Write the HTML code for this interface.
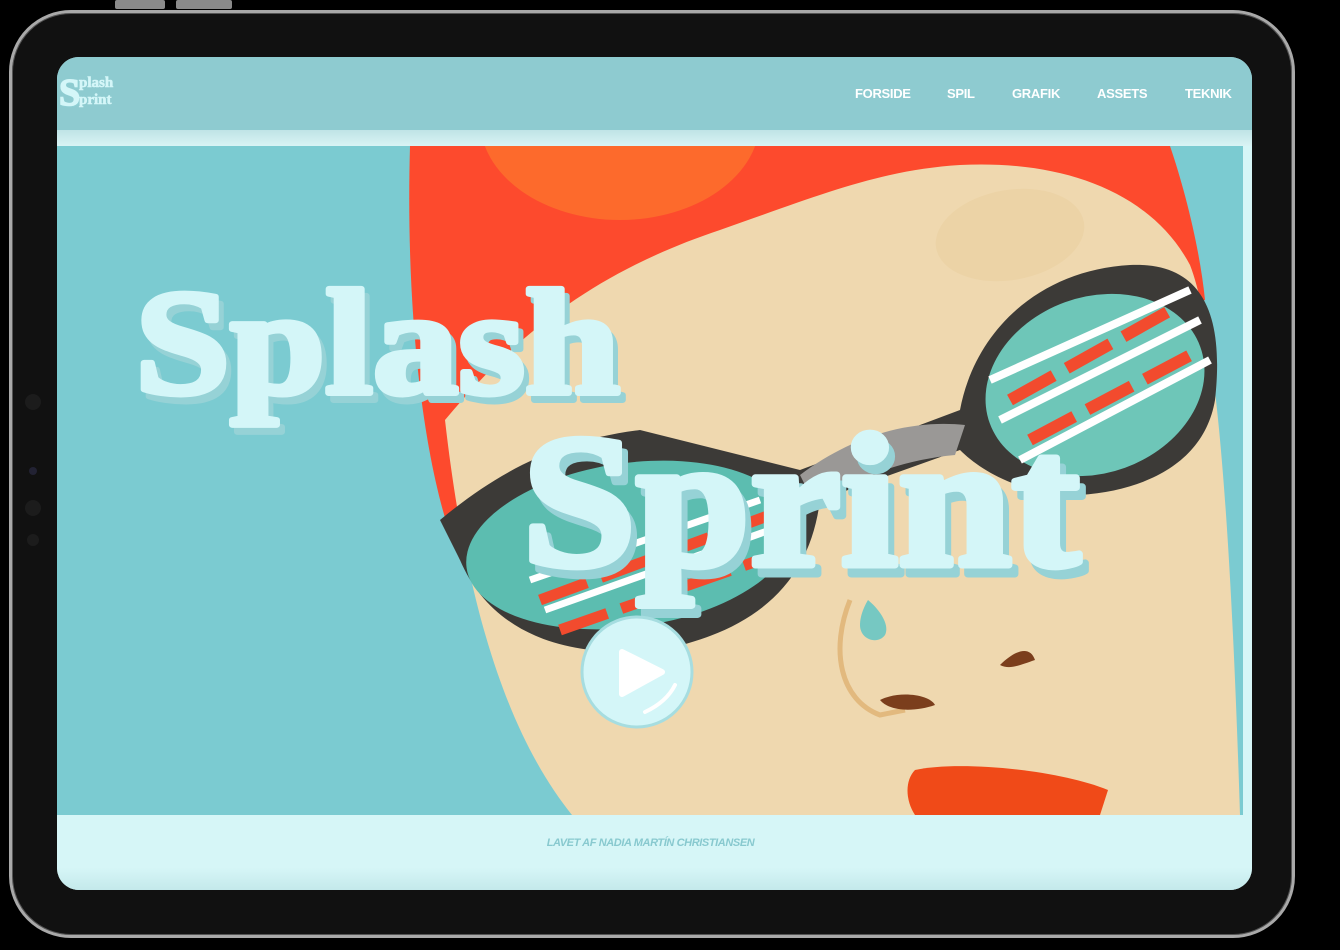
<!DOCTYPE html>
<html><head><meta charset="utf-8"><style>
html,body{margin:0;padding:0;background:#000;width:1340px;height:950px;overflow:hidden;font-family:"Liberation Sans",Arial,sans-serif}
.frame{position:absolute;left:9px;top:10px;width:1286px;height:928px;border-radius:62px;background:#111;border:3px solid #a9a9a9;box-sizing:border-box;box-shadow:inset 0 0 0 1px #555}
.btn{position:absolute;top:0;height:9px;background:#8a8a8a;border-radius:2px}
.screen{position:absolute;left:57px;top:57px;width:1195px;height:833px;border-radius:22px;overflow:hidden;background:#d6f6f7}
.hdr{position:absolute;left:0;top:0;width:100%;height:73px;background:#8ecbd0}
.strip{position:absolute;left:0;top:73px;width:100%;height:16px;background:linear-gradient(#bfe3e6,#d9f3f4)}
.nav{position:absolute;top:29px;color:#fff;font-weight:bold;font-size:13px;letter-spacing:-0.3px}
.foot{position:absolute;left:0;top:758px;width:100%;height:75px;background:linear-gradient(#d6f6f7 70%,#c4e9eb)}
.ft{position:absolute;top:22px;left:-4px;width:100%;text-align:center;font-size:11px;font-weight:bold;font-style:italic;color:#88c9cf;letter-spacing:-0.4px}
.dot{position:absolute;left:25px;width:16px;height:16px;border-radius:50%;background:#1c1c1c}
</style></head><body>
<div class="btn" style="left:115px;width:50px"></div>
<div class="btn" style="left:176px;width:56px"></div>
<div class="frame"></div>
<div class="dot" style="top:394px"></div>
<div class="dot" style="top:500px"></div>
<div class="dot" style="top:534px;width:12px;height:12px;left:27px"></div>
<div class="dot" style="top:467px;width:8px;height:8px;left:29px;background:#223"></div>
<div class="screen">
 <div class="hdr">
  <svg width="70" height="50" style="position:absolute;left:2px;top:14px">
   <text x="1" y="35" font-family="Liberation Serif" font-weight="bold" font-size="38" fill="#8fcfd4" stroke="#8fcfd4" stroke-width="1.5">S</text>
   <text x="0" y="34" font-family="Liberation Serif" font-weight="bold" font-size="38" fill="#d4f6f8" stroke="#d4f6f8" stroke-width="1.5">S</text>
   <text x="20" y="16" font-family="Liberation Serif" font-weight="bold" font-size="15" fill="#d4f6f8" stroke="#d4f6f8" stroke-width="0.6">plash</text>
   <text x="20" y="33" font-family="Liberation Serif" font-weight="bold" font-size="15" fill="#d4f6f8" stroke="#d4f6f8" stroke-width="0.6">print</text>
  </svg>
  <div class="nav" style="left:798px">FORSIDE</div>
  <div class="nav" style="left:890px">SPIL</div>
  <div class="nav" style="left:955px">GRAFIK</div>
  <div class="nav" style="left:1040px">ASSETS</div>
  <div class="nav" style="left:1128px">TEKNIK</div>
 </div>
 <div class="strip"></div>
 <svg style="position:absolute;left:0;top:89px" width="1186" height="669" viewBox="57 146 1186 669">
  <rect x="57" y="146" width="1186" height="669" fill="#7bcbd1"/>
  <path d="M410,146 H1170 C1185,190 1200,250 1205,300 L460,560 C425,480 405,320 410,146Z" fill="#fd4a2d"/>
  <ellipse cx="620" cy="120" rx="140" ry="100" fill="#fd6a2c"/>
  <path d="M445,420 C520,330 600,270 720,230 C820,195 880,170 960,165 C1060,160 1150,190 1190,265 C1215,330 1230,500 1240,815 H572 C520,750 470,640 445,420Z" fill="#efd8af"/>
  <ellipse cx="1010" cy="235" rx="75" ry="45" fill="#ecd3a6" transform="rotate(-10 1010 235)"/>
  <path d="M850,600 C830,650 840,700 880,715 L905,710" stroke="#e2b97e" stroke-width="5" fill="none"/>
  <path d="M880,700 C900,690 930,695 935,705 C915,712 890,712 880,700Z" fill="#7b3e1c"/>
  <path d="M1000,665 C1015,650 1030,645 1035,660 C1020,665 1010,670 1000,665Z" fill="#7b3e1c"/>
  <path d="M915,770 C960,760 1060,770 1108,790 L1100,815 H915 C905,800 905,780 915,770Z" fill="#f04a18"/>
  <path d="M868,600 C880,610 890,625 885,635 C878,645 860,640 860,625 C860,615 865,605 868,600Z" fill="#76c8c2"/>
  <path d="M440,520 C500,470 560,440 640,430 L800,470 L960,410 C975,330 1040,270 1130,265 C1200,262 1225,310 1215,400 C1205,460 1150,490 1080,495 C1020,495 980,470 960,450 L820,500 C810,580 760,630 660,650 C560,660 490,630 460,560 Z" fill="#3c3a37"/>
  <ellipse cx="630" cy="545" rx="165" ry="82" fill="#5cbdb0" transform="rotate(-8 630 545)"/>
  <ellipse cx="1095" cy="385" rx="112" ry="88" fill="#6ec6b8" transform="rotate(-20 1095 385)"/>
  <path d="M1000,420 L1200,320 M990,380 L1190,290 M1020,460 L1210,360" stroke="#fff" stroke-width="8"/>
  <path d="M1030,440 L1200,350 M1010,400 L1180,305" stroke="#f24b2e" stroke-width="12" stroke-dasharray="50,15"/>
  <path d="M530,580 L760,500 M545,610 L770,530" stroke="#fff" stroke-width="7"/>
  <path d="M540,600 L770,515 M560,630 L760,560" stroke="#f24b2e" stroke-width="11" stroke-dasharray="50,15"/>
  <path d="M800,475 C860,430 920,420 965,425 L955,455 C900,460 850,480 815,505Z" fill="#9a9896"/>
  <text x="140" y="400" textLength="485" lengthAdjust="spacingAndGlyphs" font-family="Liberation Serif" font-weight="bold" font-size="150" fill="#96d2d6" stroke="#96d2d6" stroke-width="6" stroke-linejoin="round">Splash</text>
  <text x="135" y="393" textLength="485" lengthAdjust="spacingAndGlyphs" font-family="Liberation Serif" font-weight="bold" font-size="150" fill="#d4f6f8" stroke="#d4f6f8" stroke-width="6" stroke-linejoin="round">Splash</text>
  <text x="528" y="574" textLength="558" lengthAdjust="spacingAndGlyphs" font-family="Liberation Serif" font-weight="bold" font-size="190" fill="#96d2d6" stroke="#96d2d6" stroke-width="7" stroke-linejoin="round">Sprint</text>
  <text x="522" y="565" textLength="558" lengthAdjust="spacingAndGlyphs" font-family="Liberation Serif" font-weight="bold" font-size="190" fill="#d4f6f8" stroke="#d4f6f8" stroke-width="7" stroke-linejoin="round">Sprint</text>
  <circle cx="637" cy="672" r="55" fill="#d4f6f8" stroke="#a6dde0" stroke-width="3"/>
  <path d="M622,652 L662,672 L622,694Z" fill="#fff" stroke="#fff" stroke-width="6" stroke-linejoin="round"/>
  <path d="M645,712 C660,705 670,695 675,685" stroke="#fff" stroke-width="4" fill="none" stroke-linecap="round"/>
 </svg>
 <div class="foot"><div class="ft">LAVET AF NADIA MARTÍN CHRISTIANSEN</div></div>
</div>
</body></html>
